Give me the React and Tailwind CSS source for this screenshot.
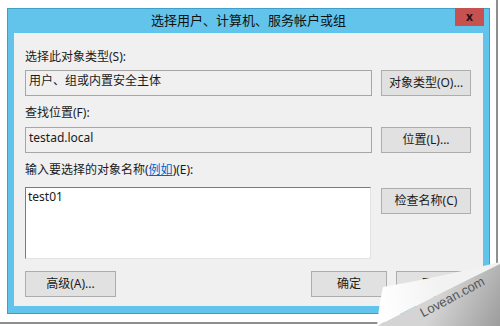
import React from 'react';

const font = "font-['Noto_Sans','Noto_Sans_CJK_SC',sans-serif]";

function Button({ label, className }) {
  return (
    <div className={`h-[26px] flex items-center justify-center bg-[#e1e1e1] border border-[#adadad] text-[12px] text-[#1a1a1a] ${className}`}>
      {label}
    </div>
  );
}

function Label({ children, className }) {
  return <div className={`h-[16px] leading-[16px] text-[12px] text-[#1a1a1a] ${className}`}>{children}</div>;
}

export default function App() {
  return (
    <div className={`w-[500px] h-[326px] bg-white relative overflow-hidden ${font}`}>
      {/* screenshot frame with drop shadow */}
      <div className="w-[498px] h-[324px] border-r-2 border-b-2 border-[#8e8e8e] pt-[8px] pl-[7px]">
        {/* window */}
        <div className="w-[483px] h-[306px] bg-[#62c4ea] border border-[#3f9fc8] flex flex-col">
          {/* title bar */}
          <div className="h-[24px] relative flex items-center justify-center text-[13px] text-[#111]">
            选择用户、计算机、服务帐户或组
            <div className="absolute top-[-1px] right-[5px] w-[29px] h-[18px] bg-[#c75050] flex items-center justify-center text-[12px] font-bold text-[#2a1010] leading-none">
              x
            </div>
          </div>

          {/* body */}
          <div className="mx-[6px] h-[273px] bg-[#f0f0f0] pl-[11px] pr-[11px] pt-[16px] flex flex-col">
            <Label>选择此对象类型(S):</Label>
            <div className="mt-[5px] flex gap-[9px]">
              <div className="w-[347px] h-[26px] border border-[#a6a6a6] bg-[#f0f0f0] px-[3px] pt-[2px] text-[12px] leading-[16px] text-[#1a1a1a]">
                用户、组或内置安全主体
              </div>
              <Button label="对象类型(O)..." className="w-[90px]" />
            </div>

            <Label className="mt-[9px]">查找位置(F):</Label>
            <div className="mt-[6px] flex gap-[9px]">
              <div className="w-[347px] h-[26px] border border-[#a6a6a6] bg-[#f0f0f0] px-[3px] pt-[2px] text-[12px] leading-[16px] text-[#1a1a1a]">
                testad.local
              </div>
              <Button label="位置(L)..." className="w-[90px]" />
            </div>

            <Label className="mt-[9px]">
              输入要选择的对象名称(<span className="text-[#0066cc] underline">例如</span>)(E):
            </Label>
            <div className="mt-[9px] flex gap-[10px] items-start">
              <div className="w-[346px] h-[72px] bg-white border border-t-[#7a7a7a] border-l-[#7a7a7a] border-r-[#e3e3e3] border-b-[#e3e3e3] px-[2px] pt-[1px] text-[12px] leading-[16px] text-[#1a1a1a]">
                test01
              </div>
              <Button label="检查名称(C)" className="w-[90px] mt-[1px]" />
            </div>

            <div className="mt-[12px] flex items-center">
              <Button label="高级(A)..." className="w-[91px]" />
              <div className="ml-auto flex gap-[9px]">
                <Button label="确定" className="w-[76px]" />
                <Button label="取消" className="w-[76px]" />
              </div>
            </div>
          </div>
        </div>
      </div>

      {/* page curl */}
      <svg className="absolute left-0 top-0 pointer-events-none" width="500" height="326" viewBox="0 0 500 326">
        <defs>
          <linearGradient id="curlGray" x1="440" y1="295" x2="500" y2="326" gradientUnits="userSpaceOnUse">
            <stop offset="0" stopColor="#d4d4d4" />
            <stop offset="1" stopColor="#9c9c9c" />
          </linearGradient>
          <linearGradient id="curlWhite" x1="380" y1="300" x2="440" y2="290" gradientUnits="userSpaceOnUse">
            <stop offset="0" stopColor="#ffffff" />
            <stop offset="1" stopColor="#f2f2f2" />
          </linearGradient>
        </defs>
        <polygon points="377,326 500,263 500,326" fill="url(#curlGray)" />
        <path d="M383,287 Q440,277 500,262 L500,264 Q440,293 377,326 Q379,305 383,287 Z" fill="url(#curlWhite)" />
      </svg>
      <div className="absolute left-[421px] top-[307px] -rotate-[28deg] origin-left text-[13px] leading-none text-[#555] font-['Liberation_Sans',sans-serif]">
        Lovean.com
      </div>
    </div>
  );
}
